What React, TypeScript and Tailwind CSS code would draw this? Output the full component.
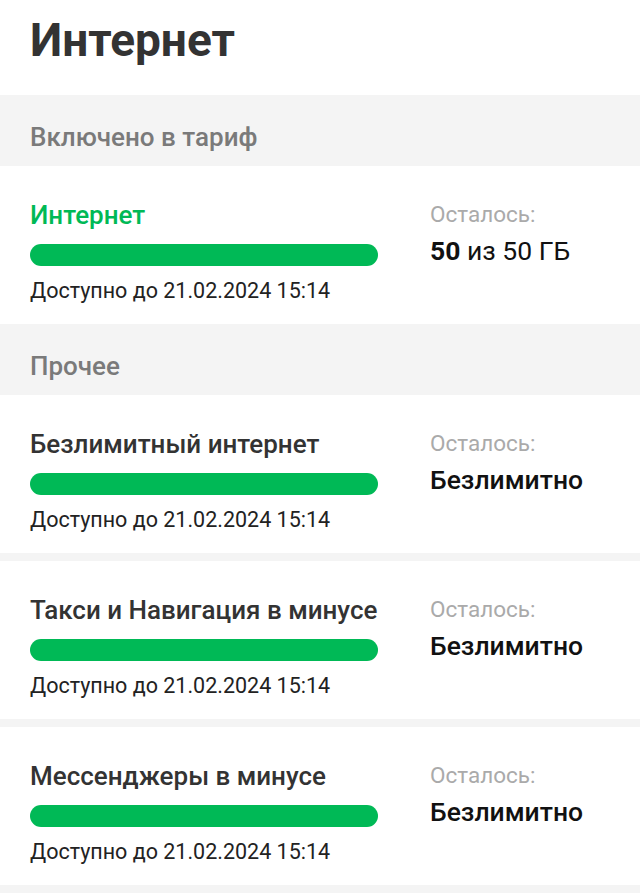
const items = [
  { title: "Безлимитный интернет" },
  { title: "Такси и Навигация в минусе" },
  { title: "Мессенджеры в минусе" },
];

function Card({
  title,
  green,
  value,
}: {
  title: string;
  green?: boolean;
  value: React.ReactNode;
}) {
  return (
    <div className="h-[158px] bg-white px-[30px] flex">
      <div className="w-[348px] shrink-0">
        <div
          className={`mt-[34px] text-[26px] leading-[30px] font-medium whitespace-nowrap ${
            green ? "text-[#00b956]" : "text-[#333333]"
          }`}
        >
          {title}
        </div>
        <div className="mt-[14px] h-[22px] rounded-full bg-[#00b956]" />
        <div className="mt-[12px] text-[21.5px] leading-[26px] text-[#222222] whitespace-nowrap">
          Доступно до 21.02.2024 15:14
        </div>
      </div>
      <div className="ml-[52px]">
        <div className="pt-[35px] text-[22.5px] leading-[26px] text-[#aaaaaa]">Осталось:</div>
        <div className="mt-[9px] text-[26.5px] leading-[30px] text-[#111111] whitespace-nowrap">{value}</div>
      </div>
    </div>
  );
}

function SectionHeader({ label }: { label: string }) {
  return (
    <div className="h-[71px] bg-[#f4f4f4] px-[30px] pt-[28px] text-[26px] leading-[28px] font-medium text-[#7a7a7a]">
      {label}
    </div>
  );
}

export default function App() {
  return (
    <div className="min-h-screen bg-white font-['Roboto',sans-serif]">
      <div className="h-[95px] px-[30px] pt-[14px]">
        <h1 className="text-[46px] leading-[52px] font-bold text-[#333333]">Интернет</h1>
      </div>

      <SectionHeader label="Включено в тариф" />
      <Card
        title="Интернет"
        green
        value={
          <>
            <span className="font-bold">50</span> из 50 ГБ
          </>
        }
      />

      <SectionHeader label="Прочее" />
      <div className="flex flex-col gap-[8px] bg-[#f4f4f4] pb-[8px]">
        {items.map((item) => (
          <Card key={item.title} title={item.title} value={<span className="font-medium">Безлимитно</span>} />
        ))}
      </div>
    </div>
  );
}
